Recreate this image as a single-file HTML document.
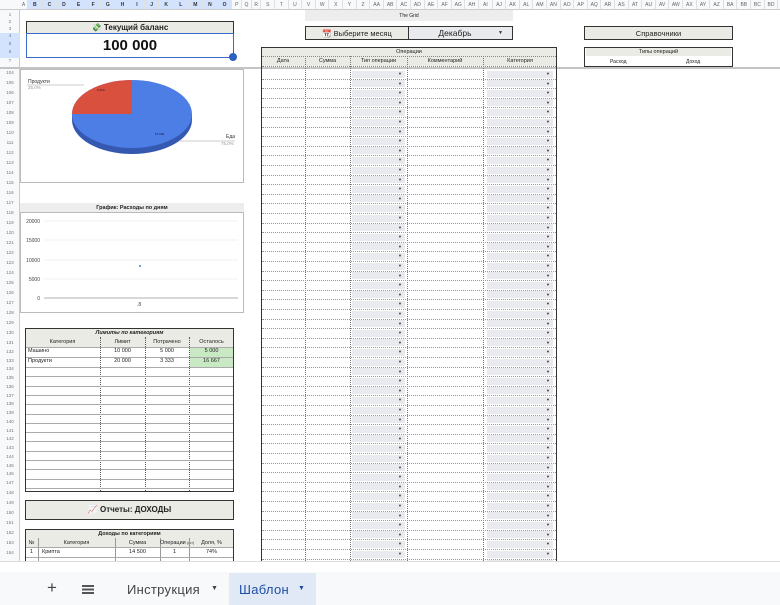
<!DOCTYPE html>
<html><head><meta charset="utf-8"><style>
*{box-sizing:border-box;margin:0;padding:0}
body{width:780px;height:605px;overflow:hidden;background:#fff;font-family:"Liberation Sans","Noto Sans CJK SC",sans-serif;position:relative;color:#222}
.a{position:absolute}
.colh{position:absolute;top:0;height:10px;font-size:5px;color:#666;text-align:center;line-height:10px;border-right:1px solid #e0e0e0;background:#f8f9fa;border-bottom:1px solid #ccc}
.rowh{position:absolute;left:0;width:20px;font-size:4.5px;color:#777;text-align:center}
.box{position:absolute;border:1.5px solid #333}
.gray{background:#ebebe6}
.t{position:absolute;font-size:6px;text-align:center;white-space:nowrap}
.dd{position:absolute;background:#e8eaed}
.ar{position:absolute;font-size:4px;color:#333}
</style></head><body>
<div class="a" style="left:0;top:0;width:780px;height:10px;background:#f8f9fa;border-bottom:1px solid #ccc"></div>
<div class="a" style="left:0;top:10px;width:20px;height:57px;background:#f8f9fa;border-right:1px solid #ccc"></div>
<div class="a" style="left:0;top:33px;width:20px;height:25px;background:#d3e3fd"></div>
<div class="a" style="left:0;top:67px;width:780px;height:2px;background:#c4c4c4"></div>
<div class="a" style="left:0;top:69px;width:20px;height:492px;background:#f8f9fa;border-right:1px solid #ccc"></div>
<div id="cols"></div><div id="rows"></div>

<div class="box gray" style="left:26px;top:21px;width:208px;height:13px"></div>
<div class="t" style="left:26px;top:23px;width:208px;font-size:8px;font-weight:bold">💸 Текущий баланс</div>
<div class="a" style="left:26px;top:33px;width:208px;height:25px;border:1.5px solid #3b6bc9"></div>
<div class="t" style="left:26px;top:37px;width:208px;font-size:15px;font-weight:bold;color:#111">100 000</div>
<div class="a" style="left:229px;top:53px;width:8px;height:8px;border-radius:50%;background:#2f5fc2"></div>

<div class="a" style="left:305px;top:10px;width:208px;height:11px;background:#ededed"></div>
<div class="t" style="left:305px;top:13px;width:208px;font-size:5px">The Grid</div>
<div class="box gray" style="left:305px;top:26px;width:104px;height:14px"></div>
<div class="t" style="left:305px;top:29px;width:104px;font-size:7.5px">📆 Выберите месяц</div>
<div class="box" style="left:408px;top:26px;width:105px;height:14px;background:#e8eaed"></div>
<div class="t" style="left:430px;top:28px;width:50px;font-size:8.5px">Декабрь</div>
<div class="ar" style="left:498px;top:30px;font-size:5px">▼</div>

<div class="box gray" style="left:584px;top:26px;width:149px;height:14px"></div>
<div class="t" style="left:584px;top:29px;width:149px;font-size:7.5px">Справочники</div>
<div class="box" style="left:584px;top:47px;width:149px;height:20px"></div>
<div class="a gray" style="left:586px;top:48px;width:145px;height:8px"></div>
<div class="t" style="left:584px;top:49px;width:149px;font-size:5.5px">Типы операций</div>
<div class="t" style="left:610px;top:59px;font-size:5px">Расход</div>
<div class="t" style="left:686px;top:59px;font-size:5px">Доход</div>

<div class="a" style="left:261px;top:47px;width:296px;height:514px;border:1.5px solid #333;border-bottom:none"></div>
<div class="a gray" style="left:262px;top:48px;width:294px;height:18px"></div>
<div class="t" style="left:261px;top:49px;width:296px;font-size:5.5px">Операции</div>
<div id="ops"></div>

<div class="a" style="left:20px;top:69px;width:224px;height:114px;border:1px solid #bbb"></div>
<svg class="a" style="left:20px;top:69px" width="224" height="114">
<ellipse cx="112" cy="51" rx="60" ry="34" fill="#3559b0"/>
<rect x="52" y="45" width="120" height="6" fill="#3559b0"/>
<ellipse cx="112" cy="45" rx="60" ry="34" fill="#4d7ee6"/>
<path d="M112 45 L112 11 A60 34 0 0 0 52 45 Z" fill="#d9503f"/>
<line x1="7" y1="16" x2="64" y2="16" stroke="#999" stroke-width=".5"/>
<line x1="160" y1="72" x2="215" y2="72" stroke="#999" stroke-width=".5"/>
<text x="8" y="14" font-size="5" fill="#333">Продукти</text>
<text x="8" y="20" font-size="4.5" fill="#999">25,0%</text>
<text x="206" y="69" font-size="5" fill="#333">Еда</text>
<text x="201" y="76" font-size="4.5" fill="#999">75,0%</text>
<text x="77" y="22" font-size="3" fill="#222">5 000</text>
<text x="135" y="66" font-size="3" fill="#222">15 000</text>
</svg>

<div class="a" style="left:20px;top:203px;width:224px;height:9px;background:#ededed"></div>
<div class="t" style="left:20px;top:205px;width:224px;font-size:5.5px;font-weight:bold">График: Расходы по дням</div>
<div class="a" style="left:20px;top:212px;width:224px;height:101px;border:1px solid #bbb"></div>
<svg class="a" style="left:20px;top:212px" width="224" height="101">
<g stroke="#e6e6e6" stroke-width=".6"><line x1="24" y1="9" x2="218" y2="9"/><line x1="24" y1="28" x2="218" y2="28"/><line x1="24" y1="48" x2="218" y2="48"/><line x1="24" y1="67" x2="218" y2="67"/></g>
<line x1="24" y1="86" x2="218" y2="86" stroke="#999" stroke-width=".8"/>
<g font-size="5" fill="#444" text-anchor="end"><text x="20" y="11">20000</text><text x="20" y="30">15000</text><text x="20" y="50">10000</text><text x="20" y="69">5000</text><text x="20" y="88">0</text></g>
<circle cx="120" cy="54" r="1" fill="#4d7ee6"/>
<text x="117" y="94" font-size="5" fill="#444">.8</text>
</svg>

<div class="box" style="left:25px;top:328px;width:209px;height:164px"></div>
<div class="a gray" style="left:26px;top:329px;width:207px;height:18px"></div>
<div class="t" style="left:25px;top:330px;width:209px;font-size:5.5px;font-weight:bold;font-style:italic">Лимиты по категориям</div>
<div id="lim"></div>

<div class="box gray" style="left:25px;top:500px;width:209px;height:20px"></div>
<div class="t" style="left:25px;top:505px;width:209px;font-size:8px;font-weight:bold">📈 Отчеты: ДОХОДЫ</div>

<div class="a" style="left:25px;top:529px;width:209px;height:32px;border:1.5px solid #333;border-bottom:none"></div>
<div class="a gray" style="left:26px;top:530px;width:207px;height:17px"></div>
<div class="t" style="left:25px;top:531px;width:209px;font-size:5.5px;font-weight:bold">Доходы по категориям</div>
<div id="doh"></div>

<div class="a" style="left:0;top:561px;width:780px;height:11px;background:#fff;border-top:1px solid #ddd"></div>
<div class="a" style="left:0;top:572px;width:780px;height:33px;background:#f8f9fa"></div>
<div class="a" style="left:47px;top:578px;font-size:17px;color:#444">+</div>
<div class="a" style="left:82px;top:585px;width:12px;height:1.5px;background:#555;box-shadow:0 3.5px 0 #555,0 7px 0 #555"></div>
<div class="a" style="left:127px;top:582px;font-size:13px;color:#444;letter-spacing:.3px">Инструкция</div>
<div class="a" style="left:211px;top:585px;font-size:7px;color:#444">▼</div>
<div class="a" style="left:229px;top:573px;width:87px;height:32px;background:#e1e9f7"></div>
<div class="a" style="left:239px;top:582px;font-size:13px;color:#1f4fa8;letter-spacing:.3px">Шаблон</div>
<div class="a" style="left:298px;top:585px;font-size:7px;color:#1f4fa8">▼</div>

<script>
function el(p,h){document.getElementById(p).insertAdjacentHTML('beforeend',h)}
var L=['A'],w=[8];
'BCDEFGHIJKLMNO'.split('').forEach(function(c){L.push(c);w.push(14.6)});
['P','Q','R'].forEach(function(c){L.push(c);w.push(9.7)});
var s='STUVWXYZ'.split('');for(var i=0;i<26;i++)s.push('A'+String.fromCharCode(65+i));s.push('BA','BB','BC','BD');
s.forEach(function(c){L.push(c);w.push(13.6)});
var cx=20;L.forEach(function(c,i){el('cols','<div class="colh" style="left:'+cx+'px;width:'+w[i]+'px;'+(i>0&&i<15?'background:#d3e3fd;color:#333;font-weight:bold':'')+'">'+c+'</div>');cx+=w[i]});
var tops=[[1,15],[2,22],[3,29],[4,36],[5,44],[6,52],[7,61]];
tops.forEach(function(r){el('rows','<div class="rowh" style="top:'+(r[1]-3)+'px">'+r[0]+'</div>')});
function ry(n){if(n<=131)return 73+(n-104)*10;if(n<=147)return 343+(n-131)*8.75;return 483+(n-147)*10}
for(var n=104;n<=155;n++){var yy=ry(n);if(yy>558)break;el('rows','<div class="rowh" style="top:'+(yy-3)+'px">'+n+'</div>')}
var oc=[261,305,350,407,483,557],on=['Дата','Сумма','Тип операции','Комментарий','Категория'];
for(var i=0;i<5;i++){el('ops','<div class="t" style="left:'+oc[i]+'px;top:58px;width:'+(oc[i+1]-oc[i])+'px;font-size:5.5px">'+on[i]+'</div>');
 if(i<4)el('ops','<div class="a" style="left:'+oc[i+1]+'px;top:56px;width:0;height:505px;border-left:1px dotted #777"></div>')}
el('ops','<div class="a" style="left:262px;top:56px;width:294px;border-top:1px dotted #888"></div>');
el('ops','<div class="a" style="left:262px;top:66px;width:294px;border-top:1px dotted #888"></div>');
for(var yy=69;yy<561;yy+=9.6){
 el('ops','<div class="dd" style="left:352px;top:'+(yy+1.5)+'px;width:53px;height:7px"></div><div class="dd" style="left:487px;top:'+(yy+1.5)+'px;width:66px;height:7px"></div>');
 el('ops','<div class="ar" style="left:398px;top:'+(yy+2)+'px">▼</div><div class="ar" style="left:546px;top:'+(yy+2)+'px">▼</div>');
 el('ops','<div class="a" style="left:262px;top:'+(yy+9.6)+'px;width:294px;border-top:1px dotted #999"></div>')}
var lc=[25,100,145,189,234],lh=['Категория','Лимит','Потрачено','Осталось'];
for(var i=0;i<4;i++){el('lim','<div class="t" style="left:'+lc[i]+'px;top:339px;width:'+(lc[i+1]-lc[i])+'px;font-size:5.5px">'+lh[i]+'</div>');
 if(i<3)el('lim','<div class="a" style="left:'+lc[i+1]+'px;top:337px;height:154px;border-left:1px dotted #555"></div>')}
el('lim','<div class="a" style="left:190px;top:347px;width:43px;height:20px;background:#c9e8c4"></div>');
var data=[['Машино','10 000','5 000','5 000'],['Продукти','20 000','3 333','16 667']];
data.forEach(function(r,j){var y0=348+j*10;el('lim','<div class="t" style="left:28px;top:'+y0+'px;font-size:5.5px">'+r[0]+'</div>');
 for(var i=1;i<4;i++)el('lim','<div class="t" style="left:'+lc[i]+'px;top:'+y0+'px;width:'+(lc[i+1]-lc[i])+'px;font-size:5.5px">'+r[i]+'</div>')});
for(var yy=347;yy<490;yy+=(yy<367?10:9.3))el('lim','<div class="a" style="left:26px;top:'+yy+'px;width:207px;border-top:1px solid #aaa"></div>');
var dc=[25,38,115,160,189,234],dh=['№','Категория','Сумма','Операции <span style="font-size:3.5px">(шт)</span>','Доля, %'];
for(var i=0;i<5;i++){el('doh','<div class="t" style="left:'+dc[i]+'px;top:540px;width:'+(dc[i+1]-dc[i])+'px;font-size:5.5px">'+dh[i]+'</div>');
 if(i<4)el('doh','<div class="a" style="left:'+dc[i+1]+'px;top:538px;height:23px;border-left:1px solid #999"></div>')}
var dr=['1','Крипта','14 500','1','74%'];
for(var i=0;i<5;i++)el('doh','<div class="t" style="left:'+(i==1?42:dc[i])+'px;top:549px;'+(i==1?'':'width:'+(dc[i+1]-dc[i])+'px;')+'font-size:5.5px">'+dr[i]+'</div>');
el('doh','<div class="a" style="left:26px;top:547px;width:207px;border-top:1px solid #aaa"></div><div class="a" style="left:26px;top:557px;width:207px;border-top:1px solid #aaa"></div>');
</script>
</body></html>
